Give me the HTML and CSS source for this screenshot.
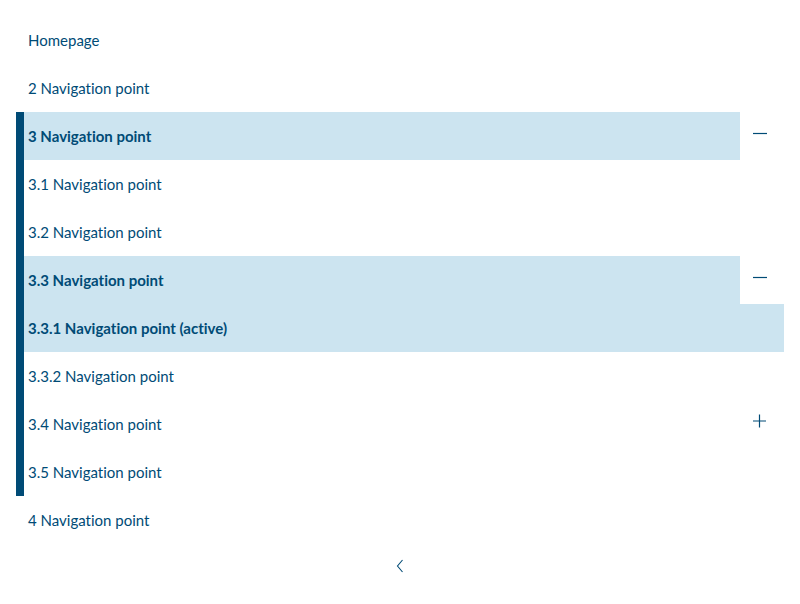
FILE: index.html
```html
<!DOCTYPE html>
<html lang="en">
<head>
<meta charset="utf-8">
<title>Navigation</title>
<link rel="stylesheet" href="styles.css">
</head>
<body>
<nav class="sidenav">
  <ul class="nav">
    <li class="item"><div class="row"><a class="link" href="#">Homepage</a></div></li>
    <li class="item"><div class="row"><a class="link" href="#">2 Navigation point</a></div></li>
    <li class="item open">
      <div class="row"><a class="link hl bold" href="#">3 Navigation point</a><button class="toggle" aria-label="collapse"><svg width="14" height="14" viewBox="0 0 14 14"><path d="M0 7.5H14" stroke="#004b76" stroke-width="1.2"/></svg></button></div>
      <ul class="nav">
        <li class="item"><div class="row"><a class="link" href="#">3.1 Navigation point</a></div></li>
        <li class="item"><div class="row"><a class="link" href="#">3.2 Navigation point</a></div></li>
        <li class="item">
          <div class="row"><a class="link hl bold" href="#">3.3 Navigation point</a><button class="toggle" aria-label="collapse"><svg width="14" height="14" viewBox="0 0 14 14"><path d="M0 7.5H14" stroke="#004b76" stroke-width="1.2"/></svg></button></div>
          <ul class="nav">
            <li class="item"><div class="row"><a class="link hl bold" href="#">3.3.1 Navigation point (active)</a></div></li>
            <li class="item"><div class="row"><a class="link" href="#">3.3.2 Navigation point</a></div></li>
          </ul>
        </li>
        <li class="item"><div class="row"><a class="link" href="#">3.4 Navigation point</a><button class="toggle" aria-label="expand"><svg width="14" height="14" viewBox="0 0 14 14"><path d="M0 7H13M6.5 0.5V13.5" stroke="#004b76" stroke-width="1.2"/></svg></button></div></li>
        <li class="item"><div class="row"><a class="link" href="#">3.5 Navigation point</a></div></li>
      </ul>
    </li>
    <li class="item"><div class="row"><a class="link" href="#">4 Navigation point</a></div></li>
  </ul>
  <div class="footer">
    <button class="back" aria-label="back"><svg width="8" height="14" viewBox="0 0 8 14"><path d="M6.5 1L1.5 7L6.5 13" fill="none" stroke="#004b76" stroke-width="1.1"/></svg></button>
  </div>
</nav>
</body>
</html>
```
FILE: styles.css
```css
* { box-sizing: border-box; }
html, body { margin: 0; padding: 0; background: #fff; }
body {
  font-family: Lato, "Noto Sans", sans-serif;
  font-size: 15px;
  color: #004b76;
  font-variant-ligatures: none;
  font-feature-settings: "liga" 0;
}
.sidenav { padding: 16px 16px 0 16px; }
.nav { list-style: none; margin: 0; padding: 0; }
.open { border-left: 8px solid #004b76; }
.row { display: flex; height: 48px; }
.link {
  flex: 1;
  display: flex;
  align-items: center;
  padding-left: 12px;
  color: #004b76;
  text-decoration: none;
}
.open .link { padding-left: 4px; }
.hl { background: #cce4f0; }
.bold { font-weight: 700; }
.toggle {
  width: 44px;
  height: 42px;
  border: 0;
  background: transparent;
  padding: 0 4px 0 0;
  display: flex;
  align-items: center;
  justify-content: center;
  flex: none;
}
.footer { display: flex; justify-content: center; }
.back {
  width: 44px;
  height: 44px;
  border: 0;
  background: transparent;
  display: flex;
  align-items: center;
  justify-content: center;
  padding: 0;
}
```
